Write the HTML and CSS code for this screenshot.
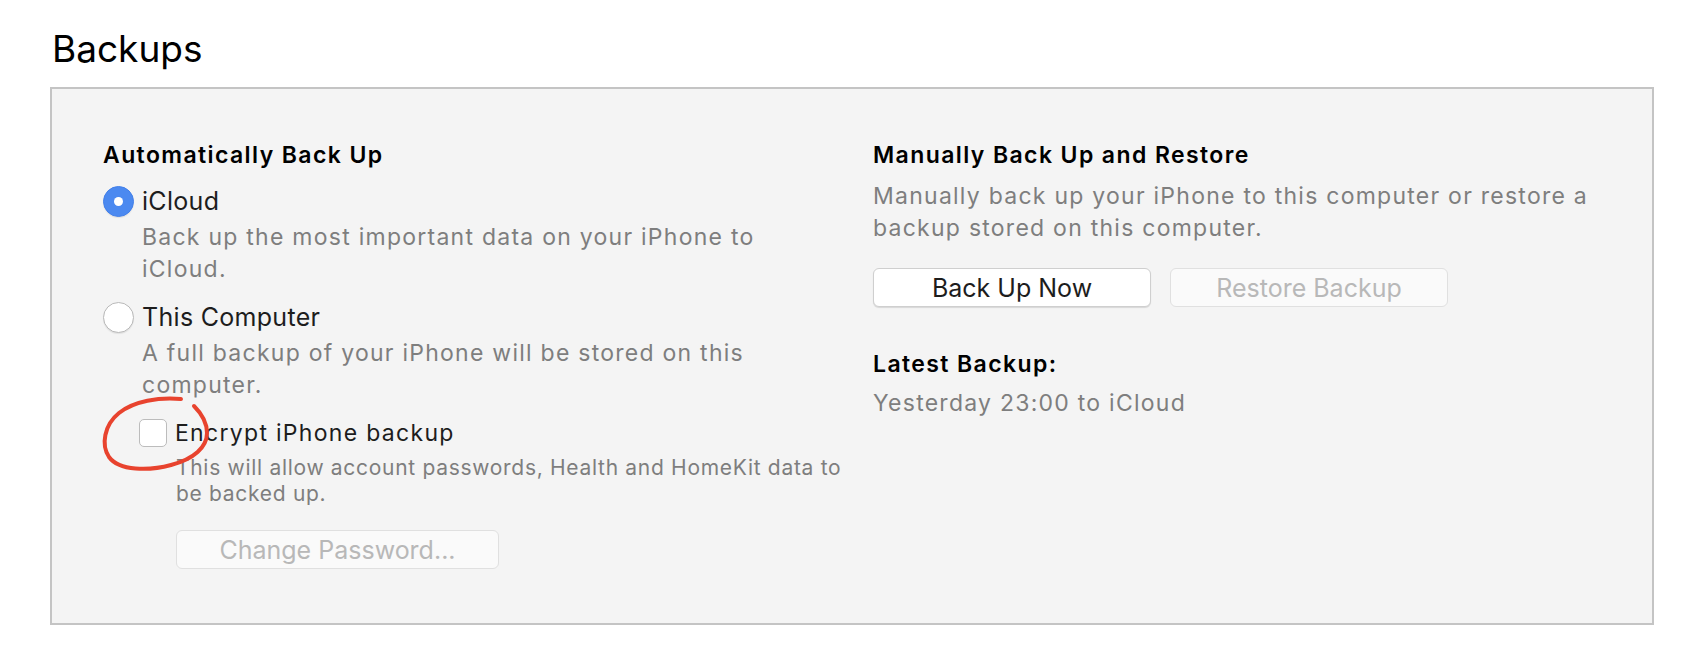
FILE: index.html
```html
<!DOCTYPE html>
<html lang="en">
<head>
  <meta charset="UTF-8" />
  <meta name="viewport" content="width=device-width, initial-scale=1.0" />
  <title>Backups</title>
  <link rel="stylesheet" href="styles.css">
</head>
<body>
  <h1>Backups</h1>

  <div class="panel">
    <div class="col">
      <h3>Automatically Back Up</h3>

      <div class="option first">
        <span class="radio checked"></span>
        <span class="label">iCloud</span>
      </div>
      <p class="desc">Back up the most important data on your iPhone to iCloud.</p>

      <div class="option">
        <span class="radio"></span>
        <span class="label">This Computer</span>
      </div>
      <p class="desc">A full backup of your iPhone will be stored on this computer.</p>

      <div class="encrypt">
        <div class="option">
          <span class="check"></span>
          <span class="label small">Encrypt iPhone backup</span>
        </div>
        <!-- hand drawn marker round the checkbox -->
        <svg class="scribble" width="112" height="78" viewBox="0 0 112 78">
          <path d="M82 4 C60 2 35 6 20 18 C5 30 2 50 10 62 C20 76 50 76 72 70 C95 64 108 52 108 38 C108 26 100 16 95 11"
                fill="none" stroke="#e8432e" stroke-width="4" stroke-linecap="round" />
        </svg>
        <p class="note">This will allow account passwords, Health and HomeKit data to be backed up.</p>
        <button class="btn wide" disabled>Change Password...</button>
      </div>
    </div>

    <div class="col right">
      <h3>Manually Back Up and Restore</h3>
      <p class="desc plain">Manually back up your iPhone to this computer or restore a backup stored on this computer.</p>

      <div class="buttons">
        <button class="btn">Back Up Now</button>
        <button class="btn" disabled>Restore Backup</button>
      </div>

      <h3 class="latest">Latest Backup:</h3>
      <p class="desc plain last">Yesterday 23:00 to iCloud</p>
    </div>
  </div>
</body>
</html>
```

FILE: styles.css
```css
body {
  margin: 0;
  background: #fff;
  color: #1d1d1d;
  font-family: Inter, "Noto Sans", sans-serif;
}
h1 {
  margin: 0;
  padding: 24px 0 0 52px;
  font-size: 37px;
  font-weight: 400;
  line-height: 50px;
  color: #000;
}
.panel {
  margin: 13px 0 0 50px;
  width: 1600px;
  height: 534px;
  border: 2px solid #c4c4c4;
  background: #f4f4f4;
  display: grid;
  grid-template-columns: 821px 1fr;
}
.col { padding: 51px 0 0 51px; }
.col.right { padding-left: 0; }
h3 {
  margin: 0;
  font-size: 23px;
  font-weight: 600;
  letter-spacing: 1.4px;
  line-height: 30px;
  color: #000;
}
.option {
  display: flex;
  align-items: center;
  gap: 8px;
  margin-top: 16px;
}
.option.first { margin-top: 15px; }
.label { font-size: 25px; letter-spacing: 0.3px; line-height: 32px; }
.label.small { font-size: 23px; letter-spacing: 1.3px; line-height: 28px; }
.radio {
  width: 29px;
  height: 29px;
  border-radius: 50%;
  border: 1px solid #b9b9b9;
  background: #fff;
  box-shadow: 0 1px 1px rgba(0, 0, 0, 0.08);
  position: relative;
}
.radio.checked {
  background: #4b89f0;
  border-color: #4380ea;
}
.radio.checked::after {
  content: "";
  position: absolute;
  left: 10px;
  top: 10px;
  width: 9px;
  height: 9px;
  border-radius: 50%;
  background: #fff;
}
.check {
  width: 26px;
  height: 26px;
  border-radius: 5px;
  border: 1px solid #bcbcbc;
  background: #fff;
}
.desc {
  margin: 4px 0 0 39px;
  width: 660px;
  font-size: 23px;
  letter-spacing: 1.25px;
  line-height: 32px;
  color: #7e7e7e;
}
.desc.plain { margin: 10px 0 0; width: 730px; }
.desc.last { margin-top: 8px; }
.encrypt {
  position: relative;
  margin: 18px 0 0 36px;
}
.encrypt .option { margin-top: 0; }
.scribble {
  position: absolute;
  left: -40px;
  top: -24px;
}
.note {
  margin: 8px 0 0 37px;
  width: 690px;
  font-size: 21px;
  letter-spacing: 0.7px;
  line-height: 26px;
  color: #7e7e7e;
}
.btn {
  width: 278px;
  height: 39px;
  border: 1px solid #cfcfcf;
  border-radius: 6px;
  background: #fff;
  box-shadow: 0 1px 1px rgba(0, 0, 0, 0.12);
  font-family: Inter, "Noto Sans", sans-serif;
  font-size: 25px;
  color: #1d1d1d;
  padding: 0;
}
.btn:disabled {
  background: #fafafa;
  border-color: #e0e0e0;
  box-shadow: none;
  color: #b8b8b8;
}
.btn.wide {
  width: 323px;
  margin: 23px 0 0 37px;
}
.buttons {
  display: flex;
  gap: 19px;
  margin-top: 24px;
}
.latest { margin-top: 42px; }
```
